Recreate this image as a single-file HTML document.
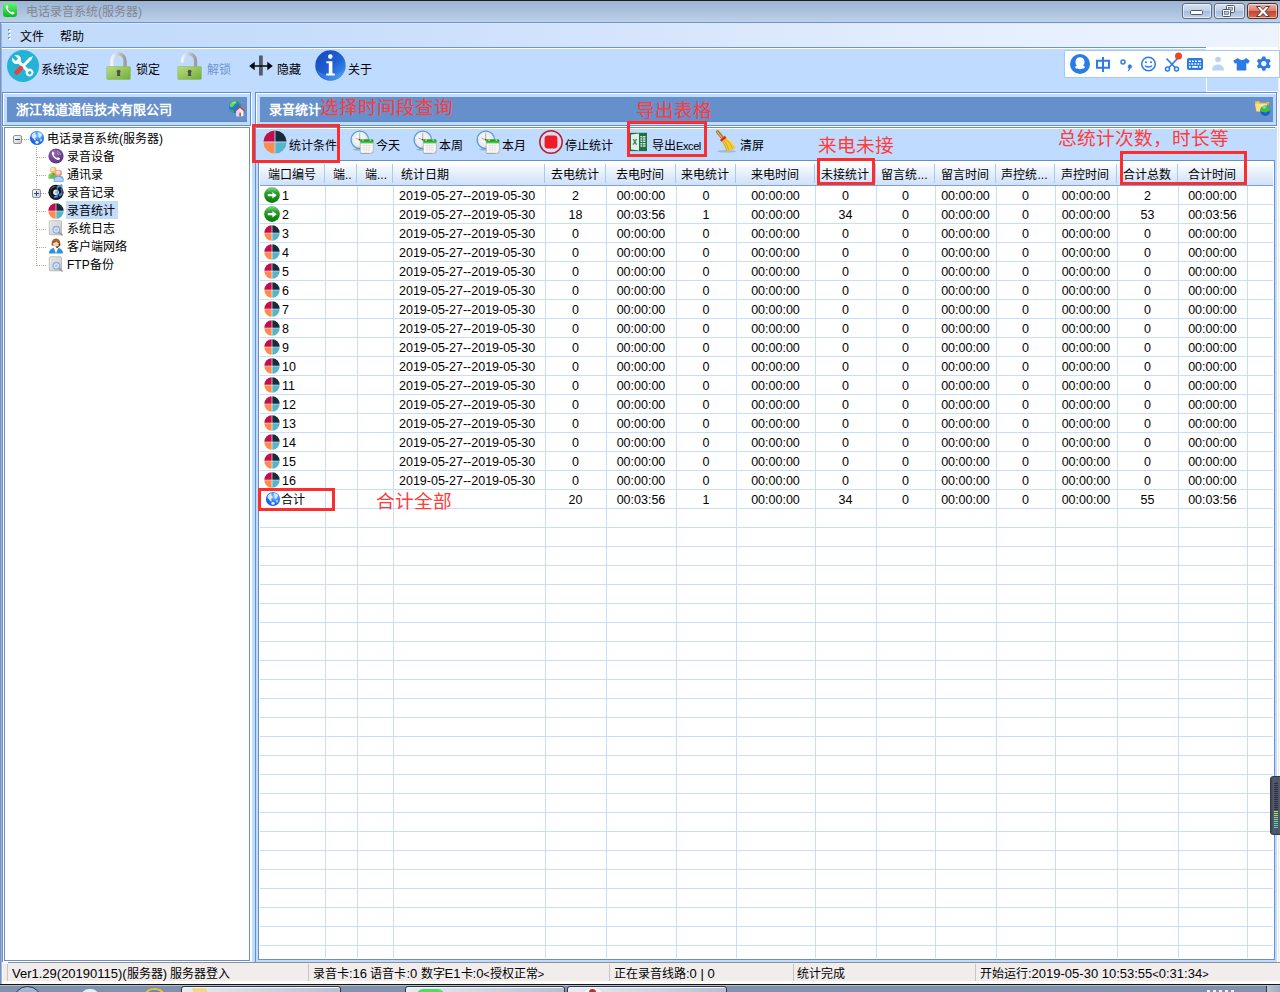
<!DOCTYPE html>
<html lang="zh-CN"><head><meta charset="utf-8"><title>电话录音系统(服务器)</title>
<style>
*{box-sizing:border-box;margin:0;padding:0}
html,body{width:1280px;height:992px;overflow:hidden}
body{position:relative;background:#bfdbff;font-family:"Liberation Sans",sans-serif;font-size:12px;color:#000;line-height:1}
.abs{position:absolute}
.l{font-size:13px}
.t{position:absolute;white-space:nowrap;line-height:14px;height:14px}
.red{position:absolute;border:3px solid #fe2d2d}
.rt{position:absolute;white-space:nowrap;color:#ff3b3b;font-family:"Liberation Sans",sans-serif;font-size:18.67px;line-height:20px}
/* table */
.hd{position:absolute;top:168px;height:14px;line-height:14px;text-align:center;white-space:nowrap;font-size:12px}
.c{position:absolute;height:14px;line-height:14px;text-align:center;white-space:nowrap;font-size:12.5px}
</style></head>
<body>
<svg width="0" height="0" style="position:absolute"><defs>
<linearGradient id="gGreenBall" x1="0" y1="0" x2="0" y2="1"><stop offset="0" stop-color="#8fd48f"/><stop offset=".35" stop-color="#2aa12c"/><stop offset="1" stop-color="#067806"/></linearGradient>
<radialGradient id="gGlobe" cx=".62" cy=".3" r=".85"><stop offset="0" stop-color="#8ccaff"/><stop offset=".45" stop-color="#2f80f7"/><stop offset="1" stop-color="#0a3cf0"/></radialGradient>
<radialGradient id="gPurple" cx=".4" cy=".3" r=".8"><stop offset="0" stop-color="#9467b5"/><stop offset="1" stop-color="#55287a"/></radialGradient>
<linearGradient id="gLockBody" x1="0" y1="0" x2="1" y2="1"><stop offset="0" stop-color="#bddc82"/><stop offset="1" stop-color="#6fae3a"/></linearGradient>
<linearGradient id="gShackle" x1="0" y1="0" x2="1" y2="0"><stop offset="0" stop-color="#f4f4f4"/><stop offset=".5" stop-color="#c9c9c9"/><stop offset="1" stop-color="#9c9c9c"/></linearGradient>
<linearGradient id="gInfo" x1="0" y1="0" x2="1" y2="1"><stop offset="0" stop-color="#1546b8"/><stop offset=".55" stop-color="#1f62d6"/><stop offset="1" stop-color="#4aa2f2"/></linearGradient>
<radialGradient id="gClock" cx=".45" cy=".4" r=".7"><stop offset="0" stop-color="#fbfafa"/><stop offset="1" stop-color="#e3e1e3"/></radialGradient>
<linearGradient id="gCalTop" x1="0" y1="0" x2="0" y2="1"><stop offset="0" stop-color="#0f8a12"/><stop offset=".55" stop-color="#2fb52f"/><stop offset="1" stop-color="#6fd06a"/></linearGradient>
<linearGradient id="gBtn" x1="0" y1="0" x2="0" y2="1"><stop offset="0" stop-color="#d3e0f1"/><stop offset=".48" stop-color="#bccde5"/><stop offset=".5" stop-color="#a3b9d8"/><stop offset="1" stop-color="#bdd3ee"/></linearGradient>
<linearGradient id="gClose" x1="0" y1="0" x2="0" y2="1"><stop offset="0" stop-color="#e9a99b"/><stop offset=".48" stop-color="#d77c6b"/><stop offset=".5" stop-color="#c3402c"/><stop offset="1" stop-color="#d7694f"/></linearGradient>
<linearGradient id="gBox" x1="0" y1="0" x2="1" y2="1"><stop offset="0" stop-color="#ffffff"/><stop offset="1" stop-color="#c9c9c4"/></linearGradient>
<linearGradient id="gDoc" x1="0" y1="0" x2="1" y2="1"><stop offset="0" stop-color="#f2f2f2"/><stop offset="1" stop-color="#c4c4c4"/></linearGradient>

<symbol id="pie" viewBox="0 0 16 16">
 <path d="M7.7 7.7V.3A7.7 7.7 0 0 0 .3 7.7z" fill="#c00f4b"/>
 <path d="M8.3 7.7V.3A7.7 7.7 0 0 1 15.700 7.7z" fill="#172b3a"/>
 <path d="M7.7 8.3v7.400A7.7 7.7 0 0 1 .3 8.3z" fill="#fb8b4e"/>
 <path d="M8.3 8.3v7.400A7.7 7.7 0 0 0 15.700 8.3z" fill="#55b5cb"/>
</symbol>
<symbol id="garrow" viewBox="0 0 16 16">
 <circle cx="8" cy="8" r="7.9" fill="url(#gGreenBall)"/>
 <path d="M3.8 7.1h4.6V4.900L12.700 8.200 8.400 11.500V9.300H3.800z" fill="#fff"/>
</symbol>
<symbol id="globe" viewBox="0 0 16 16">
 <circle cx="8" cy="8" r="7.100" fill="url(#gGlobe)"/>
 <path d="M2.600 5.200c.8-1.700 2.300-2.700 3.900-2.900.5.600-.2 1.200-.1 2 .2.900 1.300.8 1.300 1.900 0 1.100-1.300 1-1.500 2.100-.1.800.8 1.300.4 2.100-.9.300-1.500-.6-1.900-1.400-.5-.9-1.600-1.100-2-2.100-.2-.6-.2-1.200-.1-1.700z" fill="#eaf5ff" opacity=".9"/>
 <path d="M8.700 2.300c1.700-.1 3.300.8 4.300 2.200.3.800-.4 1-.9 1.400-.6.500-.1 1.300-.8 1.800-.7.500-1.500-.2-1.800-.9-.3-.8.400-1.200.2-1.900-.2-.8-1.300-1.500-1-2.600z" fill="#eaf5ff" opacity=".85"/>
 <path d="M6.800 11.200c.9-.5 2.300-.3 2.900.5.400.8-.3 1.700-1.300 2-.9.200-1.800-.2-2.100-1-.2-.6 0-1.200.5-1.500z" fill="#f2faff" opacity=".95"/>
 <path d="M11.300 9.300c.6-.4 1.500-.2 1.800.4.100.7-.4 1.500-1.100 1.700-.6.100-1-.3-1.100-.9-.1-.5 0-.9.400-1.200z" fill="#d6ebff" opacity=".8"/>
 <path d="M3 12.500a7.100 7.100 0 0 0 10 0 8 8 0 0 1-10 0z" fill="#9fe4ff" opacity=".7"/>
</symbol>
<symbol id="pphone" viewBox="0 0 16 16">
 <circle cx="8" cy="8" r="7.600" fill="url(#gPurple)"/>
 <path d="M4.300 3.800c.4-.4.900-.3 1.200.2l.7 1.200c.2.400.1.700-.2 1-.3.300-.3.600-.1 1 .6 1.100 1.400 1.900 2.500 2.500.4.200.7.200 1-.1.300-.3.700-.4 1-.2l1.200.7c.5.300.5.800.2 1.200-.7.800-1.700.9-2.700.5C7 11 5 9 4.100 6.800c-.4-1-.4-2.200.2-3z" fill="#fff"/>
 <path d="M9 3.500c1.900.2 3.300 1.600 3.500 3.500M9 5.200c1 .2 1.600.8 1.800 1.800" stroke="#d9c9e8" stroke-width=".8" fill="none" opacity=".8"/>
</symbol>
<symbol id="people" viewBox="0 0 16 16">
 <path d="M.5 12.800V9.500c0-1.500 1.800-2.500 4.800-2.500s4.800 1 4.800 2.500v3.300z" fill="#63c24a"/><path d="M1.300 12.200V9.700c0-1 1.500-1.800 4-1.800" fill="none" stroke="#a6e38f" stroke-width=".8"/>
 <path d="M4.200 7.200l1.100 2.300 1.100-2.300z" fill="#e33b2b"/>
 <circle cx="5.300" cy="4" r="3.200" fill="#efb956"/><circle cx="4.800" cy="3.400" r="1.900" fill="#fbe6b0"/>
 <path d="M5.600 15.700v-2.900c0-1.900 1.900-3 5-3s5 1.100 5 3v2.900z" fill="#5c9fe8"/><path d="M6.500 15.100v-2.100c0-1.300 1.500-2.100 4.100-2.100s4.100.8 4.100 2.100v2.100z" fill="#b3d4f9"/>
 <circle cx="10.600" cy="7.200" r="3.400" fill="#ee9a8a"/><circle cx="10.100" cy="6.600" r="2.100" fill="#fcdcd2"/>
</symbol>
<symbol id="cd" viewBox="0 0 16 16">
 <circle cx="8" cy="8.300" r="7.600" fill="#0f1113"/>
 <circle cx="8" cy="8.300" r="5.600" fill="none" stroke="#303438" stroke-width="1.200"/>
 <path d="M3 5a6 6 0 0 1 4-2.600" stroke="#5a6068" stroke-width="1" fill="none"/>
 <circle cx="8" cy="8.300" r="2.900" fill="#e6eef8"/><circle cx="8" cy="8.300" r="1.200" fill="#9db9e3"/>
 <path d="M9.300 9.500V2.200l4.600-1.400v7" stroke="#4a93e2" stroke-width="1" fill="none"/><path d="M9.300 2.200l4.600-1.400v1.600l-4.600 1.400z" fill="#4a93e2"/>
 <ellipse cx="7.800" cy="12.600" rx="2" ry="1.300" fill="#3e8be4" transform="rotate(-20 7.800 12.600)"/><ellipse cx="12.400" cy="10.600" rx="1.900" ry="1.200" fill="#3e8be4" transform="rotate(-20 12.400 10.600)"/>
 <path d="M9.300 9.500v3M13.900 7.800v2.800" stroke="#3e8be4" stroke-width="1"/>
</symbol>
<symbol id="logdoc" viewBox="0 0 16 16">
 <rect x="1.300" y=".8" width="12.200" height="14" rx=".8" fill="url(#gDoc)" stroke="#a9a9a9" stroke-width=".7"/>
 <rect x="3" y="2.300" width="8.800" height="11" fill="#dadada" opacity=".7"/>
 <circle cx="8.400" cy="9.800" r="3.300" fill="#dfeaf8" stroke="#8fb0dc" stroke-width="1.300"/>
 <circle cx="8.400" cy="9.800" r="1.500" fill="#a9c6ee"/>
 <path d="M11 12.300l3 2.600" stroke="#9a9a9a" stroke-width="1.600" stroke-linecap="round"/>
</symbol>
<symbol id="agent" viewBox="0 0 16 16">
 <path d="M3.800 7.800C3 3.600 4.900.6 8 .6s5 3 4.200 7.200z" fill="#a0602c"/>
 <ellipse cx="8" cy="5.600" rx="2.900" ry="3.400" fill="#f6cfa5"/>
 <path d="M4.600 4.800C5.400 2.600 7 2 8.300 2.200c1.700.2 2.900 1.300 3.100 3-1.200-.3-2.400-1-3.100-2-.8 1-2.200 1.600-3.700 1.600z" fill="#8a4c1d"/>
 <path d="M.9 15.600c0-3.400 2.400-5.300 4.900-5.700L8 12.500l2.200-2.600c2.500.4 4.900 2.300 4.900 5.700z" fill="#2f93d8"/>
 <path d="M5.800 9.900L8 15.600l2.200-5.700L8 11z" fill="#fff"/>
 <path d="M11.300 5.500v2c0 1-.8 1.500-2.300 1.500" stroke="#222" stroke-width=".9" fill="none"/><rect x="8" y="8.400" width="2" height="1.300" rx=".6" fill="#222"/>
</symbol>
<symbol id="clockcal" viewBox="0 0 24 24">
 <ellipse cx="9" cy="19.600" rx="6" ry=".8" fill="#6b7686" opacity=".45"/>
 <circle cx="9.800" cy="9.800" r="9.500" fill="#a9d3f3"/>
 <circle cx="9.800" cy="9.800" r="8.700" fill="url(#gClock)" stroke="#559bdc" stroke-width="1.300"/>
 <path d="M9.700 3.400V9.800L5.600 8.200" stroke="#8d8d8d" stroke-width=".7" fill="none"/><circle cx="9.700" cy="9.700" r=".9" fill="#4a4a4a"/>
 <path d="M9.800 2.300v1M9.800 16.300v1M2.300 9.800h1M16.300 9.800h1" stroke="#bdbdbd" stroke-width=".7"/>
 <rect x="10.300" y="9.600" width="13" height="13.800" rx="1" fill="#fdfdfd" stroke="#9b9b9b" stroke-width=".6"/>
 <path d="M10.300 10.400a1 1 0 0 1 1-1h11a1 1 0 0 1 1 1V13.500H10.300z" fill="url(#gCalTop)"/>
 <rect x="12.300" y="9.600" width="1.600" height="1" fill="#f3fff3"/><rect x="19.600" y="9.600" width="1.600" height="1" fill="#f3fff3"/>
 <path d="M11.800 15.500h10M11.800 17.800h10M11.800 20.100h10M14 14.300v7.800M16.500 14.300v7.800M19 14.300v7.800" stroke="#dcdcdc" stroke-width=".7"/>
 <path d="M19.800 23.400l3.500-3.500v2.500a1 1 0 0 1-1 1z" fill="#c9c9c9"/>
 <path d="M10.600 23.300h9" stroke="#8a8a8a" stroke-width=".6"/>
</symbol>
</defs></svg>
<div class="abs" style="left:0;top:0;width:1280px;height:1px;background:#1c1c1c"></div>
<div class="abs" style="left:0;top:1px;width:1280px;height:21px;background:linear-gradient(#9db5d4,#a9c0dd 45%,#bdd0e8)"></div>
<div class="abs" style="left:0;top:22px;width:1280px;height:1px;background:#6d94cc"></div>
<div class="abs" style="left:0;top:23px;width:1280px;height:1px;background:#dbe8fa"></div>
<svg class="abs" style="left:3px;top:3px" width="14" height="14" viewBox="0 0 14 14"><defs><linearGradient id="gph" x1="0" y1="0" x2="0" y2="1"><stop offset="0" stop-color="#62f673"/><stop offset="1" stop-color="#0db622"/></linearGradient></defs><rect width="14" height="14" rx="3" fill="url(#gph)"/><path d="M3.2 2.6c.5-.5 1.1-.4 1.4.2l.6 1.3c.2.4 0 .8-.3 1.1-.3.3-.3.6 0 1.1.7 1.2 1.600 2.100 2.900 2.800.4.200.7.200 1-.1.300-.300.800-.400 1.200-.200l1.100.7c.5.300.500.900.100 1.300-.700.700-1.700.800-2.700.400C6.300 10.200 4.100 8 3 5.500 2.600 4.500 2.600 3.300 3.200 2.600z" fill="#fff"/></svg>
<div class="t" style="left:26px;top:5px;color:#81868f;font-size:12px">电话录音系统(服务器)</div>
<div class="abs" style="left:0;top:24px;width:1280px;height:23px;background:linear-gradient(90deg,#c2dbfb 0,#c6ddfb 22%,#d6e5fc 50%,#e6effd 78%,#edf4fe)"></div>
<div class="abs" style="left:0;top:47px;width:1280px;height:1px;background:#6d94cc"></div>
<div class="abs" style="left:0;top:48px;width:1280px;height:1px;background:#fff"></div>
<div class="t" style="left:20px;top:30px">文件</div>
<div class="t" style="left:60px;top:30px">帮助</div>
<div class="t" style="left:41px;top:63px">系统设定</div>
<div class="t" style="left:136px;top:63px">锁定</div>
<div class="t" style="left:207px;top:63px;color:#6f95d0">解锁</div>
<div class="t" style="left:277px;top:63px">隐藏</div>
<div class="t" style="left:348px;top:63px">关于</div>
<div class="abs" style="left:3px;top:93px;width:249px;height:34px;border:1px solid #fff"></div>
<div class="abs" style="left:2px;top:92px;width:249px;height:34px;border:1px solid #6690cb"></div>
<div class="abs" style="left:7px;top:97px;width:240px;height:25px;background:#6690cb;border-bottom:1px solid #5f8ac6"></div>
<div class="t" style="left:16px;top:103px;color:#fff;font-weight:bold;font-size:13px">浙江铭道通信技术有限公司</div>
<div class="abs" style="left:2px;top:127px;width:1px;height:835px;background:#6690cb"></div>
<div class="abs" style="left:3px;top:127px;width:1px;height:835px;background:#fff"></div>
<div class="abs" style="left:250px;top:127px;width:2px;height:835px;background:#fff"></div>
<div class="abs" style="left:4px;top:127px;width:246px;height:834px;border:1px solid #6690cb;background:#fff"></div>
<div class="abs" style="left:3px;top:961px;width:249px;height:1px;background:#fff"></div>
<div class="abs" style="left:36px;top:147px;width:1px;height:119px;background:repeating-linear-gradient(#b4a996 0 1px,transparent 1px 2px)"></div>
<div class="abs" style="left:22px;top:139px;width:7px;height:1px;background:repeating-linear-gradient(90deg,#b4a996 0 1px,transparent 1px 2px)"></div>
<div class="abs" style="left:37px;top:157px;width:10px;height:1px;background:repeating-linear-gradient(90deg,#b4a996 0 1px,transparent 1px 2px)"></div>
<div class="abs" style="left:37px;top:175px;width:10px;height:1px;background:repeating-linear-gradient(90deg,#b4a996 0 1px,transparent 1px 2px)"></div>
<div class="abs" style="left:41px;top:193px;width:6px;height:1px;background:repeating-linear-gradient(90deg,#b4a996 0 1px,transparent 1px 2px)"></div>
<div class="abs" style="left:37px;top:211px;width:10px;height:1px;background:repeating-linear-gradient(90deg,#b4a996 0 1px,transparent 1px 2px)"></div>
<div class="abs" style="left:37px;top:229px;width:10px;height:1px;background:repeating-linear-gradient(90deg,#b4a996 0 1px,transparent 1px 2px)"></div>
<div class="abs" style="left:37px;top:247px;width:10px;height:1px;background:repeating-linear-gradient(90deg,#b4a996 0 1px,transparent 1px 2px)"></div>
<div class="abs" style="left:37px;top:265px;width:10px;height:1px;background:repeating-linear-gradient(90deg,#b4a996 0 1px,transparent 1px 2px)"></div>
<svg class="abs" style="left:13px;top:135px" width="9" height="9" viewBox="0 0 9 9"><rect x=".5" y=".5" width="8" height="8" rx="1.500" fill="url(#gBox)" stroke="#919191"/><path d="M2 4.500h5" stroke="#23429a" stroke-width="1"/></svg>
<svg class="abs" style="left:32px;top:189px" width="9" height="9" viewBox="0 0 9 9"><rect x=".5" y=".5" width="8" height="8" rx="1.500" fill="url(#gBox)" stroke="#919191"/><path d="M2 4.500h5M4.500 2v5" stroke="#23429a" stroke-width="1"/></svg>
<svg class="abs" style="left:29px;top:130px" width="16" height="16"><use href="#globe"/></svg>
<div class="t" style="left:47px;top:132px">电话录音系统(服务器)</div>
<div class="abs" style="left:66px;top:201px;width:52px;height:18px;background:#c3dcfb"></div>
<svg class="abs" style="left:48px;top:148px" width="16" height="16"><use href="#pphone"/></svg>
<div class="t" style="left:67px;top:150px">录音设备</div>
<svg class="abs" style="left:48px;top:166px" width="16" height="16"><use href="#people"/></svg>
<div class="t" style="left:67px;top:168px">通讯录</div>
<svg class="abs" style="left:48px;top:184px" width="16" height="16"><use href="#cd"/></svg>
<div class="t" style="left:67px;top:186px">录音记录</div>
<svg class="abs" style="left:48px;top:202.5px" width="16" height="16"><use href="#pie"/></svg>
<div class="t" style="left:67px;top:204px">录音统计</div>
<svg class="abs" style="left:48px;top:220px" width="16" height="16"><use href="#logdoc"/></svg>
<div class="t" style="left:67px;top:222px">系统日志</div>
<svg class="abs" style="left:48px;top:238px" width="16" height="16"><use href="#agent"/></svg>
<div class="t" style="left:67px;top:240px">客户端网络</div>
<svg class="abs" style="left:48px;top:256px" width="16" height="16"><use href="#logdoc"/></svg>
<div class="t" style="left:67px;top:258px">FTP备份</div>
<div class="abs" style="left:256px;top:93px;width:1022px;height:34px;border:1px solid #fff"></div>
<div class="abs" style="left:255px;top:92px;width:1022px;height:34px;border:1px solid #6690cb"></div>
<div class="abs" style="left:260px;top:97px;width:1013px;height:25px;background:#6690cb;border-bottom:1px solid #5f8ac6"></div>
<div class="t" style="left:269px;top:103px;color:#fff;font-weight:bold;font-size:13px">录音统计</div>
<div class="abs" style="left:255px;top:127px;width:1px;height:835px;background:#6690cb"></div>
<div class="abs" style="left:1277px;top:127px;width:1px;height:835px;background:#fff"></div>
<div class="abs" style="left:256px;top:127px;width:1019px;height:1px;background:#6690cb"></div>
<div class="abs" style="left:256px;top:128px;width:1019px;height:1px;background:#fff"></div>
<div class="abs" style="left:258px;top:160px;width:1017px;height:800px;border:1px solid #6690cb;background:#fff"></div>
<div class="t" style="left:289px;top:139px">统计条件</div>
<div class="t" style="left:376px;top:139px">今天</div>
<div class="t" style="left:439px;top:139px">本周</div>
<div class="t" style="left:502px;top:139px">本月</div>
<div class="t" style="left:565px;top:139px">停止统计</div>
<div class="t" style="left:740px;top:139px">清屏</div>
<div class="t" style="left:652px;top:139px">导出<span style="font-size:11px;letter-spacing:-0.4px">Excel</span></div>
<div class="abs" style="left:260px;top:161px;width:1013px;height:24px;background:linear-gradient(#ffffff 8%,#e6f0fc 50%,#cfe0f8)"></div>
<div class="abs" style="left:260px;top:185px;width:1013px;height:1px;background:#7da2d8"></div>
<div class="abs" style="left:324px;top:164px;width:1px;height:19px;background:#a9c8f5"></div>
<div class="abs" style="left:356px;top:164px;width:1px;height:19px;background:#a9c8f5"></div>
<div class="abs" style="left:392px;top:164px;width:1px;height:19px;background:#a9c8f5"></div>
<div class="abs" style="left:544px;top:164px;width:1px;height:19px;background:#a9c8f5"></div>
<div class="abs" style="left:605px;top:164px;width:1px;height:19px;background:#a9c8f5"></div>
<div class="abs" style="left:675px;top:164px;width:1px;height:19px;background:#a9c8f5"></div>
<div class="abs" style="left:735px;top:164px;width:1px;height:19px;background:#a9c8f5"></div>
<div class="abs" style="left:814px;top:164px;width:1px;height:19px;background:#a9c8f5"></div>
<div class="abs" style="left:875px;top:164px;width:1px;height:19px;background:#a9c8f5"></div>
<div class="abs" style="left:934px;top:164px;width:1px;height:19px;background:#a9c8f5"></div>
<div class="abs" style="left:995px;top:164px;width:1px;height:19px;background:#a9c8f5"></div>
<div class="abs" style="left:1054px;top:164px;width:1px;height:19px;background:#a9c8f5"></div>
<div class="abs" style="left:1116px;top:164px;width:1px;height:19px;background:#a9c8f5"></div>
<div class="abs" style="left:1177px;top:164px;width:1px;height:19px;background:#a9c8f5"></div>
<div class="abs" style="left:1246px;top:164px;width:1px;height:19px;background:#a9c8f5"></div>
<div class="hd" style="left:268px;text-align:left">端口编号</div>
<div class="hd" style="left:333px;text-align:left">端..</div>
<div class="hd" style="left:365px;text-align:left">端...</div>
<div class="hd" style="left:401px;text-align:left">统计日期</div>
<div class="hd" style="left:544px;width:61px">去电统计</div>
<div class="hd" style="left:605px;width:70px">去电时间</div>
<div class="hd" style="left:675px;width:60px">来电统计</div>
<div class="hd" style="left:735px;width:79px">来电时间</div>
<div class="hd" style="left:814px;width:61px">未接统计</div>
<div class="hd" style="left:875px;width:59px">留言统...</div>
<div class="hd" style="left:934px;width:61px">留言时间</div>
<div class="hd" style="left:995px;width:59px">声控统...</div>
<div class="hd" style="left:1054px;width:62px">声控时间</div>
<div class="hd" style="left:1116px;width:61px">合计总数</div>
<div class="hd" style="left:1177px;width:69px">合计时间</div>
<div class="abs" style="left:260px;top:204px;width:1013px;height:1px;background:#c6ddfb"></div>
<div class="abs" style="left:260px;top:223px;width:1013px;height:1px;background:#c6ddfb"></div>
<div class="abs" style="left:260px;top:242px;width:1013px;height:1px;background:#c6ddfb"></div>
<div class="abs" style="left:260px;top:261px;width:1013px;height:1px;background:#c6ddfb"></div>
<div class="abs" style="left:260px;top:280px;width:1013px;height:1px;background:#c6ddfb"></div>
<div class="abs" style="left:260px;top:299px;width:1013px;height:1px;background:#c6ddfb"></div>
<div class="abs" style="left:260px;top:318px;width:1013px;height:1px;background:#c6ddfb"></div>
<div class="abs" style="left:260px;top:337px;width:1013px;height:1px;background:#c6ddfb"></div>
<div class="abs" style="left:260px;top:356px;width:1013px;height:1px;background:#c6ddfb"></div>
<div class="abs" style="left:260px;top:375px;width:1013px;height:1px;background:#c6ddfb"></div>
<div class="abs" style="left:260px;top:394px;width:1013px;height:1px;background:#c6ddfb"></div>
<div class="abs" style="left:260px;top:413px;width:1013px;height:1px;background:#c6ddfb"></div>
<div class="abs" style="left:260px;top:432px;width:1013px;height:1px;background:#c6ddfb"></div>
<div class="abs" style="left:260px;top:451px;width:1013px;height:1px;background:#c6ddfb"></div>
<div class="abs" style="left:260px;top:470px;width:1013px;height:1px;background:#c6ddfb"></div>
<div class="abs" style="left:260px;top:489px;width:1013px;height:1px;background:#c6ddfb"></div>
<div class="abs" style="left:260px;top:508px;width:1013px;height:1px;background:#c6ddfb"></div>
<div class="abs" style="left:260px;top:527px;width:1013px;height:1px;background:#c6ddfb"></div>
<div class="abs" style="left:260px;top:546px;width:1013px;height:1px;background:#c6ddfb"></div>
<div class="abs" style="left:260px;top:565px;width:1013px;height:1px;background:#c6ddfb"></div>
<div class="abs" style="left:260px;top:584px;width:1013px;height:1px;background:#c6ddfb"></div>
<div class="abs" style="left:260px;top:603px;width:1013px;height:1px;background:#c6ddfb"></div>
<div class="abs" style="left:260px;top:622px;width:1013px;height:1px;background:#c6ddfb"></div>
<div class="abs" style="left:260px;top:641px;width:1013px;height:1px;background:#c6ddfb"></div>
<div class="abs" style="left:260px;top:660px;width:1013px;height:1px;background:#c6ddfb"></div>
<div class="abs" style="left:260px;top:679px;width:1013px;height:1px;background:#c6ddfb"></div>
<div class="abs" style="left:260px;top:698px;width:1013px;height:1px;background:#c6ddfb"></div>
<div class="abs" style="left:260px;top:717px;width:1013px;height:1px;background:#c6ddfb"></div>
<div class="abs" style="left:260px;top:736px;width:1013px;height:1px;background:#c6ddfb"></div>
<div class="abs" style="left:260px;top:755px;width:1013px;height:1px;background:#c6ddfb"></div>
<div class="abs" style="left:260px;top:774px;width:1013px;height:1px;background:#c6ddfb"></div>
<div class="abs" style="left:260px;top:793px;width:1013px;height:1px;background:#c6ddfb"></div>
<div class="abs" style="left:260px;top:812px;width:1013px;height:1px;background:#c6ddfb"></div>
<div class="abs" style="left:260px;top:831px;width:1013px;height:1px;background:#c6ddfb"></div>
<div class="abs" style="left:260px;top:850px;width:1013px;height:1px;background:#c6ddfb"></div>
<div class="abs" style="left:260px;top:869px;width:1013px;height:1px;background:#c6ddfb"></div>
<div class="abs" style="left:260px;top:888px;width:1013px;height:1px;background:#c6ddfb"></div>
<div class="abs" style="left:260px;top:907px;width:1013px;height:1px;background:#c6ddfb"></div>
<div class="abs" style="left:260px;top:926px;width:1013px;height:1px;background:#c6ddfb"></div>
<div class="abs" style="left:260px;top:945px;width:1013px;height:1px;background:#c6ddfb"></div>
<div class="abs" style="left:325px;top:186px;width:1px;height:772px;background:#c6ddfb"></div>
<div class="abs" style="left:357px;top:186px;width:1px;height:772px;background:#c6ddfb"></div>
<div class="abs" style="left:393px;top:186px;width:1px;height:772px;background:#c6ddfb"></div>
<div class="abs" style="left:545px;top:186px;width:1px;height:772px;background:#c6ddfb"></div>
<div class="abs" style="left:606px;top:186px;width:1px;height:772px;background:#c6ddfb"></div>
<div class="abs" style="left:676px;top:186px;width:1px;height:772px;background:#c6ddfb"></div>
<div class="abs" style="left:736px;top:186px;width:1px;height:772px;background:#c6ddfb"></div>
<div class="abs" style="left:815px;top:186px;width:1px;height:772px;background:#c6ddfb"></div>
<div class="abs" style="left:876px;top:186px;width:1px;height:772px;background:#c6ddfb"></div>
<div class="abs" style="left:935px;top:186px;width:1px;height:772px;background:#c6ddfb"></div>
<div class="abs" style="left:996px;top:186px;width:1px;height:772px;background:#c6ddfb"></div>
<div class="abs" style="left:1055px;top:186px;width:1px;height:772px;background:#c6ddfb"></div>
<div class="abs" style="left:1117px;top:186px;width:1px;height:772px;background:#c6ddfb"></div>
<div class="abs" style="left:1178px;top:186px;width:1px;height:772px;background:#c6ddfb"></div>
<div class="abs" style="left:1247px;top:186px;width:1px;height:772px;background:#c6ddfb"></div>
<div class="c" style="left:282px;top:189px">1</div>
<div class="c" style="left:399px;top:189px">2019-05-27--2019-05-30</div>
<div class="c" style="left:545px;width:61px;top:189px">2</div>
<div class="c" style="left:606px;width:70px;top:189px">00:00:00</div>
<div class="c" style="left:676px;width:60px;top:189px">0</div>
<div class="c" style="left:736px;width:79px;top:189px">00:00:00</div>
<div class="c" style="left:815px;width:61px;top:189px">0</div>
<div class="c" style="left:876px;width:59px;top:189px">0</div>
<div class="c" style="left:935px;width:61px;top:189px">00:00:00</div>
<div class="c" style="left:996px;width:59px;top:189px">0</div>
<div class="c" style="left:1055px;width:62px;top:189px">00:00:00</div>
<div class="c" style="left:1117px;width:61px;top:189px">2</div>
<div class="c" style="left:1178px;width:69px;top:189px">00:00:00</div>
<div class="c" style="left:282px;top:208px">2</div>
<div class="c" style="left:399px;top:208px">2019-05-27--2019-05-30</div>
<div class="c" style="left:545px;width:61px;top:208px">18</div>
<div class="c" style="left:606px;width:70px;top:208px">00:03:56</div>
<div class="c" style="left:676px;width:60px;top:208px">1</div>
<div class="c" style="left:736px;width:79px;top:208px">00:00:00</div>
<div class="c" style="left:815px;width:61px;top:208px">34</div>
<div class="c" style="left:876px;width:59px;top:208px">0</div>
<div class="c" style="left:935px;width:61px;top:208px">00:00:00</div>
<div class="c" style="left:996px;width:59px;top:208px">0</div>
<div class="c" style="left:1055px;width:62px;top:208px">00:00:00</div>
<div class="c" style="left:1117px;width:61px;top:208px">53</div>
<div class="c" style="left:1178px;width:69px;top:208px">00:03:56</div>
<div class="c" style="left:282px;top:227px">3</div>
<div class="c" style="left:399px;top:227px">2019-05-27--2019-05-30</div>
<div class="c" style="left:545px;width:61px;top:227px">0</div>
<div class="c" style="left:606px;width:70px;top:227px">00:00:00</div>
<div class="c" style="left:676px;width:60px;top:227px">0</div>
<div class="c" style="left:736px;width:79px;top:227px">00:00:00</div>
<div class="c" style="left:815px;width:61px;top:227px">0</div>
<div class="c" style="left:876px;width:59px;top:227px">0</div>
<div class="c" style="left:935px;width:61px;top:227px">00:00:00</div>
<div class="c" style="left:996px;width:59px;top:227px">0</div>
<div class="c" style="left:1055px;width:62px;top:227px">00:00:00</div>
<div class="c" style="left:1117px;width:61px;top:227px">0</div>
<div class="c" style="left:1178px;width:69px;top:227px">00:00:00</div>
<div class="c" style="left:282px;top:246px">4</div>
<div class="c" style="left:399px;top:246px">2019-05-27--2019-05-30</div>
<div class="c" style="left:545px;width:61px;top:246px">0</div>
<div class="c" style="left:606px;width:70px;top:246px">00:00:00</div>
<div class="c" style="left:676px;width:60px;top:246px">0</div>
<div class="c" style="left:736px;width:79px;top:246px">00:00:00</div>
<div class="c" style="left:815px;width:61px;top:246px">0</div>
<div class="c" style="left:876px;width:59px;top:246px">0</div>
<div class="c" style="left:935px;width:61px;top:246px">00:00:00</div>
<div class="c" style="left:996px;width:59px;top:246px">0</div>
<div class="c" style="left:1055px;width:62px;top:246px">00:00:00</div>
<div class="c" style="left:1117px;width:61px;top:246px">0</div>
<div class="c" style="left:1178px;width:69px;top:246px">00:00:00</div>
<div class="c" style="left:282px;top:265px">5</div>
<div class="c" style="left:399px;top:265px">2019-05-27--2019-05-30</div>
<div class="c" style="left:545px;width:61px;top:265px">0</div>
<div class="c" style="left:606px;width:70px;top:265px">00:00:00</div>
<div class="c" style="left:676px;width:60px;top:265px">0</div>
<div class="c" style="left:736px;width:79px;top:265px">00:00:00</div>
<div class="c" style="left:815px;width:61px;top:265px">0</div>
<div class="c" style="left:876px;width:59px;top:265px">0</div>
<div class="c" style="left:935px;width:61px;top:265px">00:00:00</div>
<div class="c" style="left:996px;width:59px;top:265px">0</div>
<div class="c" style="left:1055px;width:62px;top:265px">00:00:00</div>
<div class="c" style="left:1117px;width:61px;top:265px">0</div>
<div class="c" style="left:1178px;width:69px;top:265px">00:00:00</div>
<div class="c" style="left:282px;top:284px">6</div>
<div class="c" style="left:399px;top:284px">2019-05-27--2019-05-30</div>
<div class="c" style="left:545px;width:61px;top:284px">0</div>
<div class="c" style="left:606px;width:70px;top:284px">00:00:00</div>
<div class="c" style="left:676px;width:60px;top:284px">0</div>
<div class="c" style="left:736px;width:79px;top:284px">00:00:00</div>
<div class="c" style="left:815px;width:61px;top:284px">0</div>
<div class="c" style="left:876px;width:59px;top:284px">0</div>
<div class="c" style="left:935px;width:61px;top:284px">00:00:00</div>
<div class="c" style="left:996px;width:59px;top:284px">0</div>
<div class="c" style="left:1055px;width:62px;top:284px">00:00:00</div>
<div class="c" style="left:1117px;width:61px;top:284px">0</div>
<div class="c" style="left:1178px;width:69px;top:284px">00:00:00</div>
<div class="c" style="left:282px;top:303px">7</div>
<div class="c" style="left:399px;top:303px">2019-05-27--2019-05-30</div>
<div class="c" style="left:545px;width:61px;top:303px">0</div>
<div class="c" style="left:606px;width:70px;top:303px">00:00:00</div>
<div class="c" style="left:676px;width:60px;top:303px">0</div>
<div class="c" style="left:736px;width:79px;top:303px">00:00:00</div>
<div class="c" style="left:815px;width:61px;top:303px">0</div>
<div class="c" style="left:876px;width:59px;top:303px">0</div>
<div class="c" style="left:935px;width:61px;top:303px">00:00:00</div>
<div class="c" style="left:996px;width:59px;top:303px">0</div>
<div class="c" style="left:1055px;width:62px;top:303px">00:00:00</div>
<div class="c" style="left:1117px;width:61px;top:303px">0</div>
<div class="c" style="left:1178px;width:69px;top:303px">00:00:00</div>
<div class="c" style="left:282px;top:322px">8</div>
<div class="c" style="left:399px;top:322px">2019-05-27--2019-05-30</div>
<div class="c" style="left:545px;width:61px;top:322px">0</div>
<div class="c" style="left:606px;width:70px;top:322px">00:00:00</div>
<div class="c" style="left:676px;width:60px;top:322px">0</div>
<div class="c" style="left:736px;width:79px;top:322px">00:00:00</div>
<div class="c" style="left:815px;width:61px;top:322px">0</div>
<div class="c" style="left:876px;width:59px;top:322px">0</div>
<div class="c" style="left:935px;width:61px;top:322px">00:00:00</div>
<div class="c" style="left:996px;width:59px;top:322px">0</div>
<div class="c" style="left:1055px;width:62px;top:322px">00:00:00</div>
<div class="c" style="left:1117px;width:61px;top:322px">0</div>
<div class="c" style="left:1178px;width:69px;top:322px">00:00:00</div>
<div class="c" style="left:282px;top:341px">9</div>
<div class="c" style="left:399px;top:341px">2019-05-27--2019-05-30</div>
<div class="c" style="left:545px;width:61px;top:341px">0</div>
<div class="c" style="left:606px;width:70px;top:341px">00:00:00</div>
<div class="c" style="left:676px;width:60px;top:341px">0</div>
<div class="c" style="left:736px;width:79px;top:341px">00:00:00</div>
<div class="c" style="left:815px;width:61px;top:341px">0</div>
<div class="c" style="left:876px;width:59px;top:341px">0</div>
<div class="c" style="left:935px;width:61px;top:341px">00:00:00</div>
<div class="c" style="left:996px;width:59px;top:341px">0</div>
<div class="c" style="left:1055px;width:62px;top:341px">00:00:00</div>
<div class="c" style="left:1117px;width:61px;top:341px">0</div>
<div class="c" style="left:1178px;width:69px;top:341px">00:00:00</div>
<div class="c" style="left:282px;top:360px">10</div>
<div class="c" style="left:399px;top:360px">2019-05-27--2019-05-30</div>
<div class="c" style="left:545px;width:61px;top:360px">0</div>
<div class="c" style="left:606px;width:70px;top:360px">00:00:00</div>
<div class="c" style="left:676px;width:60px;top:360px">0</div>
<div class="c" style="left:736px;width:79px;top:360px">00:00:00</div>
<div class="c" style="left:815px;width:61px;top:360px">0</div>
<div class="c" style="left:876px;width:59px;top:360px">0</div>
<div class="c" style="left:935px;width:61px;top:360px">00:00:00</div>
<div class="c" style="left:996px;width:59px;top:360px">0</div>
<div class="c" style="left:1055px;width:62px;top:360px">00:00:00</div>
<div class="c" style="left:1117px;width:61px;top:360px">0</div>
<div class="c" style="left:1178px;width:69px;top:360px">00:00:00</div>
<div class="c" style="left:282px;top:379px">11</div>
<div class="c" style="left:399px;top:379px">2019-05-27--2019-05-30</div>
<div class="c" style="left:545px;width:61px;top:379px">0</div>
<div class="c" style="left:606px;width:70px;top:379px">00:00:00</div>
<div class="c" style="left:676px;width:60px;top:379px">0</div>
<div class="c" style="left:736px;width:79px;top:379px">00:00:00</div>
<div class="c" style="left:815px;width:61px;top:379px">0</div>
<div class="c" style="left:876px;width:59px;top:379px">0</div>
<div class="c" style="left:935px;width:61px;top:379px">00:00:00</div>
<div class="c" style="left:996px;width:59px;top:379px">0</div>
<div class="c" style="left:1055px;width:62px;top:379px">00:00:00</div>
<div class="c" style="left:1117px;width:61px;top:379px">0</div>
<div class="c" style="left:1178px;width:69px;top:379px">00:00:00</div>
<div class="c" style="left:282px;top:398px">12</div>
<div class="c" style="left:399px;top:398px">2019-05-27--2019-05-30</div>
<div class="c" style="left:545px;width:61px;top:398px">0</div>
<div class="c" style="left:606px;width:70px;top:398px">00:00:00</div>
<div class="c" style="left:676px;width:60px;top:398px">0</div>
<div class="c" style="left:736px;width:79px;top:398px">00:00:00</div>
<div class="c" style="left:815px;width:61px;top:398px">0</div>
<div class="c" style="left:876px;width:59px;top:398px">0</div>
<div class="c" style="left:935px;width:61px;top:398px">00:00:00</div>
<div class="c" style="left:996px;width:59px;top:398px">0</div>
<div class="c" style="left:1055px;width:62px;top:398px">00:00:00</div>
<div class="c" style="left:1117px;width:61px;top:398px">0</div>
<div class="c" style="left:1178px;width:69px;top:398px">00:00:00</div>
<div class="c" style="left:282px;top:417px">13</div>
<div class="c" style="left:399px;top:417px">2019-05-27--2019-05-30</div>
<div class="c" style="left:545px;width:61px;top:417px">0</div>
<div class="c" style="left:606px;width:70px;top:417px">00:00:00</div>
<div class="c" style="left:676px;width:60px;top:417px">0</div>
<div class="c" style="left:736px;width:79px;top:417px">00:00:00</div>
<div class="c" style="left:815px;width:61px;top:417px">0</div>
<div class="c" style="left:876px;width:59px;top:417px">0</div>
<div class="c" style="left:935px;width:61px;top:417px">00:00:00</div>
<div class="c" style="left:996px;width:59px;top:417px">0</div>
<div class="c" style="left:1055px;width:62px;top:417px">00:00:00</div>
<div class="c" style="left:1117px;width:61px;top:417px">0</div>
<div class="c" style="left:1178px;width:69px;top:417px">00:00:00</div>
<div class="c" style="left:282px;top:436px">14</div>
<div class="c" style="left:399px;top:436px">2019-05-27--2019-05-30</div>
<div class="c" style="left:545px;width:61px;top:436px">0</div>
<div class="c" style="left:606px;width:70px;top:436px">00:00:00</div>
<div class="c" style="left:676px;width:60px;top:436px">0</div>
<div class="c" style="left:736px;width:79px;top:436px">00:00:00</div>
<div class="c" style="left:815px;width:61px;top:436px">0</div>
<div class="c" style="left:876px;width:59px;top:436px">0</div>
<div class="c" style="left:935px;width:61px;top:436px">00:00:00</div>
<div class="c" style="left:996px;width:59px;top:436px">0</div>
<div class="c" style="left:1055px;width:62px;top:436px">00:00:00</div>
<div class="c" style="left:1117px;width:61px;top:436px">0</div>
<div class="c" style="left:1178px;width:69px;top:436px">00:00:00</div>
<div class="c" style="left:282px;top:455px">15</div>
<div class="c" style="left:399px;top:455px">2019-05-27--2019-05-30</div>
<div class="c" style="left:545px;width:61px;top:455px">0</div>
<div class="c" style="left:606px;width:70px;top:455px">00:00:00</div>
<div class="c" style="left:676px;width:60px;top:455px">0</div>
<div class="c" style="left:736px;width:79px;top:455px">00:00:00</div>
<div class="c" style="left:815px;width:61px;top:455px">0</div>
<div class="c" style="left:876px;width:59px;top:455px">0</div>
<div class="c" style="left:935px;width:61px;top:455px">00:00:00</div>
<div class="c" style="left:996px;width:59px;top:455px">0</div>
<div class="c" style="left:1055px;width:62px;top:455px">00:00:00</div>
<div class="c" style="left:1117px;width:61px;top:455px">0</div>
<div class="c" style="left:1178px;width:69px;top:455px">00:00:00</div>
<div class="c" style="left:282px;top:474px">16</div>
<div class="c" style="left:399px;top:474px">2019-05-27--2019-05-30</div>
<div class="c" style="left:545px;width:61px;top:474px">0</div>
<div class="c" style="left:606px;width:70px;top:474px">00:00:00</div>
<div class="c" style="left:676px;width:60px;top:474px">0</div>
<div class="c" style="left:736px;width:79px;top:474px">00:00:00</div>
<div class="c" style="left:815px;width:61px;top:474px">0</div>
<div class="c" style="left:876px;width:59px;top:474px">0</div>
<div class="c" style="left:935px;width:61px;top:474px">00:00:00</div>
<div class="c" style="left:996px;width:59px;top:474px">0</div>
<div class="c" style="left:1055px;width:62px;top:474px">00:00:00</div>
<div class="c" style="left:1117px;width:61px;top:474px">0</div>
<div class="c" style="left:1178px;width:69px;top:474px">00:00:00</div>
<div class="c" style="left:281px;top:493px;font-size:12px">合计</div>
<div class="c" style="left:545px;width:61px;top:493px">20</div>
<div class="c" style="left:606px;width:70px;top:493px">00:03:56</div>
<div class="c" style="left:676px;width:60px;top:493px">1</div>
<div class="c" style="left:736px;width:79px;top:493px">00:00:00</div>
<div class="c" style="left:815px;width:61px;top:493px">34</div>
<div class="c" style="left:876px;width:59px;top:493px">0</div>
<div class="c" style="left:935px;width:61px;top:493px">00:00:00</div>
<div class="c" style="left:996px;width:59px;top:493px">0</div>
<div class="c" style="left:1055px;width:62px;top:493px">00:00:00</div>
<div class="c" style="left:1117px;width:61px;top:493px">55</div>
<div class="c" style="left:1178px;width:69px;top:493px">00:03:56</div>
<svg class="abs" style="left:264px;top:187px" width="16" height="16"><use href="#garrow"/></svg>
<svg class="abs" style="left:264px;top:206px" width="16" height="16"><use href="#garrow"/></svg>
<svg class="abs" style="left:264px;top:225px" width="16" height="16"><use href="#pie"/></svg>
<svg class="abs" style="left:264px;top:244px" width="16" height="16"><use href="#pie"/></svg>
<svg class="abs" style="left:264px;top:263px" width="16" height="16"><use href="#pie"/></svg>
<svg class="abs" style="left:264px;top:282px" width="16" height="16"><use href="#pie"/></svg>
<svg class="abs" style="left:264px;top:301px" width="16" height="16"><use href="#pie"/></svg>
<svg class="abs" style="left:264px;top:320px" width="16" height="16"><use href="#pie"/></svg>
<svg class="abs" style="left:264px;top:339px" width="16" height="16"><use href="#pie"/></svg>
<svg class="abs" style="left:264px;top:358px" width="16" height="16"><use href="#pie"/></svg>
<svg class="abs" style="left:264px;top:377px" width="16" height="16"><use href="#pie"/></svg>
<svg class="abs" style="left:264px;top:396px" width="16" height="16"><use href="#pie"/></svg>
<svg class="abs" style="left:264px;top:415px" width="16" height="16"><use href="#pie"/></svg>
<svg class="abs" style="left:264px;top:434px" width="16" height="16"><use href="#pie"/></svg>
<svg class="abs" style="left:264px;top:453px" width="16" height="16"><use href="#pie"/></svg>
<svg class="abs" style="left:264px;top:472px" width="16" height="16"><use href="#pie"/></svg>
<svg class="abs" style="left:265px;top:491px" width="16" height="16"><use href="#globe"/></svg>
<svg class="abs" style="left:263px;top:130px" width="24" height="24"><use href="#pie"/></svg>
<svg class="abs" style="left:350px;top:130px" width="24" height="24"><use href="#clockcal"/></svg>
<svg class="abs" style="left:413px;top:130px" width="24" height="24"><use href="#clockcal"/></svg>
<svg class="abs" style="left:476px;top:130px" width="24" height="24"><use href="#clockcal"/></svg>
<svg class="abs" style="left:539px;top:130px" width="24" height="24" viewBox="0 0 24 24"><circle cx="12" cy="12" r="11.200" fill="#d5dcf3" stroke="#b3202a" stroke-width="1.500"/><rect x="5.600" y="5.600" width="12.800" height="12.800" rx="3" fill="#ee1c25"/></svg>
<svg class="abs" style="left:630px;top:132px" width="18" height="20" viewBox="0 0 18 20"><rect x="0" y=".8" width="17" height="18.300" fill="#1e7145"/><path d="M1 2.600l8-1v17l-8-1z" fill="#e2f1e8"/><path d="M3.200 7l3.400 5.600M6.600 7l-3.400 5.600" stroke="#2b8a57" stroke-width="1.300" fill="none"/><path d="M10.400 4h2v1.500h-2zM13 4h2.500v1.500H13zM10.400 6.300h2v1.500h-2zM13 6.300h2.500v1.500H13zM10.400 8.600h2v1.500h-2zM13 8.600h2.500v1.500H13zM10.400 10.900h2v1.500h-2zM13 10.900h2.500v1.500H13zM10.400 13.200h2v1.500h-2zM13 13.200h2.500v1.500H13z" fill="#cfe8d9"/></svg>
<svg class="abs" style="left:715px;top:129px" width="22" height="24" viewBox="0 0 22 24"><ellipse cx="11.500" cy="22.300" rx="9.500" ry="1.300" fill="#6b7686" opacity=".35"/><path d="M2.600 2.800L7.400 8.600" stroke="#b97a20" stroke-width="3.400" stroke-linecap="round"/><path d="M2.300 2.900L6.800 8.300" stroke="#e2ad5a" stroke-width="1.100" stroke-linecap="round"/><path d="M6.500 12.800L11.400 8.700C15.200 10.800 18.600 14 20.400 17.500L18.400 20.300 15 21.700 11.400 22.300C10.600 18.800 8.800 15.300 6.500 12.800z" fill="#f2cc38"/><path d="M9 11.500c2.200 2.800 3.900 6.300 4.700 9.900M10.600 10.200c2.900 2.400 5.500 5.600 7.200 9.400M7.800 12.600c1.900 2.700 3.200 5.900 3.900 9.200" stroke="#c79a1a" stroke-width=".7" fill="none"/><path d="M12 9.400c3 1.900 5.700 4.600 7.600 7.700" stroke="#fbe98a" stroke-width=".8" fill="none"/><path d="M5 10.900L9.900 6.800 11.400 8.700 6.500 12.800z" fill="#d0262a"/><path d="M5.400 10.700L9.800 7" stroke="#f0645f" stroke-width=".7"/></svg>
<svg class="abs" style="left:7px;top:50px" width="32" height="32" viewBox="0 0 32 32"><circle cx="16" cy="16" r="16" fill="#24b3d4"/><g transform="rotate(-45 16 16)"><circle cx="16" cy="6.800" r="4.500" fill="#fff"/><rect x="14.300" y="1" width="3.400" height="6.400" fill="#24b3d4"/><rect x="14.400" y="9" width="3.200" height="14" fill="#fff"/><circle cx="16" cy="25.200" r="3.800" fill="#fff"/><circle cx="16" cy="25.600" r="1.700" fill="#24b3d4"/></g><g transform="rotate(45 16 16)"><rect x="14.500" y="4.500" width="3" height="13" rx=".5" fill="#fff"/><path d="M15 4.500l1-2.800 1 2.800z" fill="#fff"/><rect x="13.600" y="16.800" width="4.800" height="10.700" rx="2.200" fill="#e8423c"/></g></svg>
<svg class="abs" style="left:106px;top:50px" width="26" height="32" viewBox="0 0 26 32"><path d="M6 17V10.500a6.500 6.500 0 0 1 13 0V17" fill="none" stroke="url(#gShackle)" stroke-width="3.400"/><rect x=".8" y="16.600" width="23.600" height="12.800" rx="1" fill="url(#gLockBody)" stroke="#8cba57" stroke-width=".6"/><circle cx="12.600" cy="21.600" r="1.900" fill="#4a4f4a"/><path d="M11.600 22h2l.7 4h-3.400z" fill="#4a4f4a"/></svg>
<svg class="abs" style="left:177px;top:50px" width="26" height="32" viewBox="0 0 26 32"><path d="M5.500 12.500V10.500a6.500 6.500 0 0 1 13 0V17" fill="none" stroke="url(#gShackle)" stroke-width="3.400"/><rect x=".8" y="16.600" width="23.600" height="12.800" rx="1" fill="url(#gLockBody)" stroke="#8cba57" stroke-width=".6"/><circle cx="12.600" cy="21.600" r="1.900" fill="#4a4f4a"/><path d="M11.600 22h2l.7 4h-3.400z" fill="#4a4f4a"/></svg>
<svg class="abs" style="left:248px;top:54px" width="26" height="24" viewBox="0 0 26 24"><rect x="11" y="1.500" width="3.800" height="20" fill="#575d66"/><path d="M1.200 12l5.500-4.300v3.500h12.600V7.700l5.500 4.300-5.500 4.300v-3.500H6.700v3.500z" fill="#0a0a0a"/></svg>
<svg class="abs" style="left:315px;top:50px" width="31" height="31" viewBox="0 0 31 31"><circle cx="15.500" cy="15.500" r="15.200" fill="url(#gInfo)"/><path d="M1.500 20A15 15 0 0 0 29.800 20 22 22 0 0 1 1.500 20z" fill="#6fb8ff" opacity=".25"/><circle cx="15.300" cy="6.600" r="2.300" fill="#fff"/><path d="M11.400 11.300h6v12.200h2.400v1.900h-8.600v-1.900h2.600V13.200h-2.400z" fill="#fff"/></svg>
<svg class="abs" style="left:228px;top:100px" width="18" height="18" viewBox="0 0 18 18"><circle cx="7" cy="7" r="6" fill="#1f78e6"/><path d="M1.600 5.500C2.500 2.600 5 1 7.800 1.100c1.400.9 1 2.300-.4 2.900-1.600.6-1.300 2.300-2.800 3-1.300.5-2.700-.3-3-1.500z" fill="#66dd33"/><path d="M8.800 1.300c1.800.5 3.200 1.800 3.800 3.500-.9.500-2 0-2.500-.9-.4-.8-1.500-1.500-1.300-2.600z" fill="#2fa82c"/><path d="M2.200 9.800c1.300-.6 2.900 0 3.600 1.300.2.700-.2 1.300-.9 1.400-1.200-.5-2.200-1.500-2.700-2.700z" fill="#3cb83a"/><path d="M4.300 3.200c.8-.6 1.800-.9 2.800-.8" stroke="#d9ffd0" stroke-width=".8" fill="none" opacity=".8"/><path d="M7.200 11l4.700-3.900 4.700 3.900v5.400H7.200z" fill="none"/><path d="M8.400 10.700l3.500-2.900 3.500 2.900v5.500h-7z" fill="#f4f2ff"/><path d="M8.400 10.700l3.500-2.900v8.400H8.400z" fill="#dcd8f6"/><path d="M6.900 11.300l5-4.200 5 4.200" fill="none" stroke="#d8401b" stroke-width="1.200"/><rect x="11.300" y="12.600" width="1.700" height="3.600" fill="#c8620f"/></svg>
<svg class="abs" style="left:1254px;top:100px" width="17" height="17" viewBox="0 0 17 17"><path d="M1 1.300h4.200l1.300 1.500h6.500v8.400H2z" fill="#f3c044"/><path d="M1 3.800l3.200-.6 1.200 1h8l-1.600 7.400H2.800z" fill="#fbe08a"/><path d="M3.500 4.500l1-.3.900.8h7" stroke="#fff4c4" stroke-width=".7" fill="none"/><path d="M12.200 1.800l3.300.5-1 2.800" fill="#f1b53a"/><circle cx="11.300" cy="10.800" r="5.100" fill="#1560d6"/><path d="M6.400 10c.3-2.600 2.400-4.400 4.900-4.400 2.600 0 4.700 1.800 5 4.300-.5 1.200-1.400 1.800-2.400 1.600-1-.2-1.200 1.100-2.300 1.300-1 .2-1.600-.8-2.600-.7-1 .1-2-.8-2.600-2.100z" fill="#3fbf3c"/><path d="M9 7.500c.9-.9 2.200-1.200 3.300-.9.300.8-.6 1.300-1.400 1.600-.8.300-1.400.600-2 0z" fill="#9be8f5" opacity=".85"/><path d="M8 7.200c.8-.9 1.700-1.300 2.800-1.400" stroke="#c9ffc0" stroke-width=".7" fill="none"/></svg>
<div class="abs" style="left:8px;top:29px;width:2px;height:2px;background:#7d9cd0"></div>
<div class="abs" style="left:9px;top:30px;width:2px;height:2px;background:#fff"></div>
<div class="abs" style="left:8px;top:33px;width:2px;height:2px;background:#7d9cd0"></div>
<div class="abs" style="left:9px;top:34px;width:2px;height:2px;background:#fff"></div>
<div class="abs" style="left:8px;top:37px;width:2px;height:2px;background:#7d9cd0"></div>
<div class="abs" style="left:9px;top:38px;width:2px;height:2px;background:#fff"></div>
<div class="abs" style="left:1182px;top:3px;width:30px;height:16px;border:1px solid #5f6f85;border-radius:3px;background:linear-gradient(#d6e2f2,#bfd0e7 47%,#a5bbd9 50%,#bed3ee);box-shadow:inset 0 0 0 1px rgba(255,255,255,.55)"></div>
<div class="abs" style="left:1214px;top:3px;width:31px;height:16px;border:1px solid #5f6f85;border-radius:3px;background:linear-gradient(#d6e2f2,#bfd0e7 47%,#a5bbd9 50%,#bed3ee);box-shadow:inset 0 0 0 1px rgba(255,255,255,.55)"></div>
<div class="abs" style="left:1247px;top:3px;width:31px;height:16px;border:1px solid #5a2a24;border-radius:3px;background:linear-gradient(#eab1a4,#d98171 47%,#c4432f 50%,#d8694f);box-shadow:inset 0 0 0 1px rgba(255,255,255,.55)"></div>
<svg class="abs" style="left:1190px;top:10px" width="14" height="7" viewBox="0 0 14 7"><rect x=".5" y=".5" width="12" height="4" rx="1" fill="#fff" stroke="#4d5564"/></svg>
<svg class="abs" style="left:1222px;top:5px" width="15" height="13" viewBox="0 0 15 13"><rect x="4.500" y=".5" width="8" height="7" rx="1" fill="#fff" stroke="#4d5564"/><rect x="6.500" y="2.500" width="4" height="3" fill="#b1c3de" stroke="#4d5564" stroke-width=".6"/><rect x=".5" y="4.500" width="8" height="7" rx="1" fill="#fff" stroke="#4d5564"/><rect x="2.500" y="6.500" width="4" height="3" fill="#b1c3de" stroke="#4d5564" stroke-width=".6"/></svg>
<svg class="abs" style="left:1255px;top:5px" width="16" height="13" viewBox="0 0 16 13"><path d="M1.500 1.500h3.700L8 4.500l2.800-3h3.700L10.200 6.500l4.300 5h-3.700L8 8.500l-2.800 3H1.500l4.300-5z" fill="#fff" stroke="#4d3a3a" stroke-width="1" stroke-linejoin="round"/></svg>
<div class="abs" style="left:1278px;top:24px;width:2px;height:960px;background:linear-gradient(90deg,#f1efe3 50%,#fcfbf6 50%)"></div>
<div class="abs" style="left:1206px;top:47px;width:72px;height:45px;background:#bfdbff;border-left:1px solid #fff;border-top:3px solid #fff;border-bottom:1px solid #fff"></div>
<div class="abs" style="left:1064px;top:50px;width:216px;height:28px;background:#fff;border:1px solid #a6c8f5"></div>
<svg class="abs" style="left:1066px;top:51px" width="214" height="26" viewBox="0 0 214 26"><circle cx="14" cy="13" r="10" fill="#2b7be4"/><path d="M14 6.300c2.600 0 4.500 2 4.500 4.600 0 1.500-.5 2.700-1.300 3.500.7.500 1.600 1 1.900 1.700.3.800-.7.900-1.400.6.300.9-.2 1.200-1.100.9-.7.500-1.600.700-2.600.700s-1.900-.2-2.600-.7c-.9.300-1.400 0-1.100-.9-.7.300-1.700.2-1.400-.6.300-.7 1.200-1.200 1.900-1.700-.8-.8-1.300-2-1.300-3.500 0-2.600 1.900-4.600 4.500-4.600z" fill="#fff"/><path d="M37 6v15M31 9.800h12v7H31z" fill="none" stroke="#2b7be4" stroke-width="2"/><circle cx="57" cy="11" r="2" fill="none" stroke="#2b7be4" stroke-width="1.500"/><path d="M62.200 15.500a1.700 1.700 0 1 1 1.700 1.700c0 1.500-.8 2.400-2 2.900 1-.8 1.200-1.600 1.200-2.600a1.700 1.700 0 0 1-.9-2z" fill="#2b7be4" stroke="#2b7be4" stroke-width=".8"/><circle cx="82.500" cy="13" r="6.800" fill="none" stroke="#2b7be4" stroke-width="1.500"/><circle cx="80" cy="11.200" r="1" fill="#2b7be4"/><circle cx="85" cy="11.200" r="1" fill="#2b7be4"/><path d="M79 14.500c1 2 6 2 7 0" fill="none" stroke="#2b7be4" stroke-width="1.300"/><path d="M100.500 7.500l9 9.500M111.500 7.500l-9 9.500" stroke="#2b7be4" stroke-width="1.700" fill="none"/><circle cx="101.500" cy="18" r="2" fill="none" stroke="#2b7be4" stroke-width="1.500"/><circle cx="110.500" cy="18" r="2" fill="none" stroke="#2b7be4" stroke-width="1.500"/><circle cx="112.500" cy="5" r="3.500" fill="#f0442a"/><rect x="121" y="7" width="16" height="12" rx="2" fill="#2b7be4"/><path d="M123 10.200h1.800M126 10.200h1.800M129 10.200h1.800M132 10.200h3M123 13h1.200M125.400 13h1.800M128.400 13h1.800M131.400 13h1.800M134.300 13h.8M123 15.900h1.800M126.200 15.900h5.600M133.200 15.900h1.800" stroke="#fff" stroke-width="1.600"/><circle cx="152" cy="8.500" r="2.800" fill="#bcd3f3"/><path d="M146 19.500c0-4 2.500-6 6-6s6 2 6 6z" fill="#bcd3f3"/><path d="M172 7l-4.800 2.800 1.800 3 1.700-.9v7.600h9.600v-7.600l1.700.9 1.800-3L180 7c-.8 1.200-2.200 1.900-4 1.900S172.800 8.200 172 7z" fill="#2b7be4"/><path d="M196.300 5.500h3l.5 2.100 1.400.8 2-.7 1.500 2.600-1.500 1.500v1.600l1.500 1.500-1.500 2.600-2-.7-1.400.8-.5 2.100h-3l-.5-2.100-1.400-.8-2 .7-1.500-2.600 1.500-1.500v-1.600l-1.500-1.500 1.500-2.600 2 .7 1.400-.8z" fill="#2b7be4"/><circle cx="197.800" cy="12.600" r="2.600" fill="#fff"/></svg>
<div class="red" style="left:252px;top:124px;width:88px;height:39px;border-width:3px"></div>
<div class="red" style="left:627px;top:121px;width:80px;height:36px;border-width:3px"></div>
<div class="red" style="left:817px;top:158px;width:58px;height:27px;border-width:3px"></div>
<div class="red" style="left:1120px;top:151px;width:127px;height:34px;border-width:3px"></div>
<div class="red" style="left:258px;top:488px;width:77px;height:23px;border-width:3px"></div>
<div class="rt" style="left:320px;top:98px">选择时间段查询</div>
<div class="rt" style="left:636px;top:101px">导出表格</div>
<div class="rt" style="left:818px;top:136px">来电未接</div>
<div class="rt" style="left:1058px;top:129px">总统计次数，时长等</div>
<div class="rt" style="left:376px;top:492px">合计全部</div>
<div class="abs" style="left:0;top:22px;width:1px;height:941px;background:#6d94cc"></div>
<div class="abs" style="left:1px;top:24px;width:1px;height:939px;background:#a3b4cc"></div>
<div class="abs" style="left:1270px;top:776px;width:12px;height:59px;border-radius:3px 0 0 3px;background:linear-gradient(90deg,#3f4556,#565d70 30%,#4a5163 60%,#5a6174);border:1px solid #32384a"></div>
<div class="abs" style="left:1274px;top:783px;width:4px;height:1px;background:#2a2f3c"></div>
<div class="abs" style="left:1274px;top:785px;width:4px;height:1px;background:#2a2f3c"></div>
<div class="abs" style="left:1274px;top:787px;width:4px;height:1px;background:#2a2f3c"></div>
<div class="abs" style="left:1274px;top:789px;width:4px;height:1px;background:#2a2f3c"></div>
<div class="abs" style="left:1274px;top:791px;width:4px;height:1px;background:#2a2f3c"></div>
<div class="abs" style="left:1274px;top:793px;width:4px;height:1px;background:#2a2f3c"></div>
<div class="abs" style="left:1274px;top:795px;width:4px;height:1px;background:#2a2f3c"></div>
<div class="abs" style="left:1274px;top:797px;width:4px;height:1px;background:#2a2f3c"></div>
<div class="abs" style="left:1274px;top:799px;width:4px;height:1px;background:#2a2f3c"></div>
<div class="abs" style="left:1274px;top:801px;width:4px;height:1px;background:#2a2f3c"></div>
<div class="abs" style="left:1274px;top:803px;width:4px;height:1px;background:#2a2f3c"></div>
<div class="abs" style="left:1274px;top:805px;width:4px;height:1px;background:#2a2f3c"></div>
<div class="abs" style="left:1274px;top:807px;width:4px;height:1px;background:#2a2f3c"></div>
<div class="abs" style="left:1274px;top:809px;width:4px;height:1px;background:#2a2f3c"></div>
<div class="abs" style="left:1274px;top:811px;width:4px;height:1px;background:#b2e35a"></div>
<div class="abs" style="left:1274px;top:813px;width:4px;height:1px;background:#a4e262"></div>
<div class="abs" style="left:1274px;top:815px;width:4px;height:1px;background:#96e26e"></div>
<div class="abs" style="left:1274px;top:817px;width:4px;height:1px;background:#86e07c"></div>
<div class="abs" style="left:1274px;top:819px;width:4px;height:1px;background:#74df8c"></div>
<div class="abs" style="left:1274px;top:821px;width:4px;height:1px;background:#62dd9c"></div>
<div class="abs" style="left:1274px;top:823px;width:4px;height:1px;background:#52dcaa"></div>
<div class="abs" style="left:1274px;top:825px;width:4px;height:1px;background:#46dab8"></div>
<div class="abs" style="left:1274px;top:827px;width:4px;height:1px;background:#3fd8c6"></div>
<div class="abs" style="left:0;top:962px;width:1280px;height:1px;background:#8f8f8f"></div>
<div class="abs" style="left:0;top:963px;width:1280px;height:18px;background:#f1edec"></div>
<div class="abs" style="left:0;top:981px;width:1280px;height:3px;background:linear-gradient(#fdfbf3,#ffffff)"></div>
<div class="abs" style="left:308px;top:964px;width:1px;height:17px;background:#c9c5c2"></div>
<div class="abs" style="left:609px;top:964px;width:1px;height:17px;background:#c9c5c2"></div>
<div class="abs" style="left:793px;top:964px;width:1px;height:17px;background:#c9c5c2"></div>
<div class="abs" style="left:975px;top:964px;width:1px;height:17px;background:#c9c5c2"></div>
<div class="t" style="left:12px;top:967px"><span class="l">Ver1.29(20190115)(</span>服务器<span class="l">)</span> 服务器登入</div>
<div class="t" style="left:313px;top:967px">录音卡<span class="l">:16</span> 语音卡<span class="l">:0</span> 数字<span class="l">E1</span>卡<span class="l">:0</span><span style="font-size:11px">&lt;</span>授权正常<span style="font-size:11px">&gt;</span></div>
<div class="t" style="left:614px;top:967px">正在录音线路<span class="l">:0 | 0</span></div>
<div class="t" style="left:797px;top:967px">统计完成</div>
<div class="t" style="left:980px;top:967px">开始运行<span class="l">:2019-05-30 10:53:55</span><span style="font-size:11px">&lt;</span><span class="l">0:31:34</span><span style="font-size:11px">&gt;</span></div>
<div class="abs" style="left:2px;top:962px;width:6px;height:2px;background:#fbfaf8"></div>
<div class="abs" style="left:7px;top:964px;width:1px;height:17px;background:#c9c5c2"></div>
<div class="abs" style="left:0;top:962px;width:1px;height:22px;background:#6d94cc"></div>
<div class="abs" style="left:1px;top:962px;width:1px;height:22px;background:#a3b4cc"></div>
<div class="abs" style="left:2px;top:964px;width:1px;height:19px;background:#fbfaf8"></div>
<div class="abs" style="left:0;top:984px;width:1280px;height:1px;background:#151515"></div>
<div class="abs" style="left:0;top:985px;width:1280px;height:1px;background:#b4c0d1"></div>
<div class="abs" style="left:0;top:986px;width:1280px;height:6px;background:#7f91ac"></div>
<div class="abs" style="left:13px;top:986px;width:29px;height:29px;border-radius:50%;border:1px solid #1f3556;background:radial-gradient(circle at 50% 60%,#7f9cc4,#b4c3d6)"></div>
<div class="abs" style="left:81px;top:989px;width:18px;height:8px;border-radius:9px 9px 0 0;background:#dff3fb"></div>
<div class="abs" style="left:145px;top:988px;width:19px;height:12px;border-radius:50%;border:2px solid #f0c020;border-bottom:none;background:#4a8fd8"></div>
<div class="abs" style="left:181px;top:986px;width:160px;height:10px;border:1px solid #2c3646;border-radius:3px 3px 0 0;background:linear-gradient(90deg,#e9edf3,#c9d2de 60%,#b4c0d0);box-shadow:inset 0 1px 0 #f4f6f9"></div>
<div class="abs" style="left:405px;top:986px;width:160px;height:10px;border:1px solid #2c3646;border-radius:3px 3px 0 0;background:linear-gradient(90deg,#e9edf3,#c9d2de 60%,#b4c0d0);box-shadow:inset 0 1px 0 #f4f6f9"></div>
<div class="abs" style="left:567px;top:986px;width:160px;height:10px;border:1px solid #2c3646;border-radius:3px 3px 0 0;background:linear-gradient(90deg,#e9edf3,#c9d2de 60%,#b4c0d0);box-shadow:inset 0 1px 0 #f4f6f9"></div>
<div class="abs" style="left:193px;top:988px;width:14px;height:6px;background:#f1d787;transform:skewX(20deg)"></div>
<div class="abs" style="left:417px;top:989px;width:27px;height:8px;border-radius:6px 6px 0 0;background:#4be064"></div>
<div class="abs" style="left:582px;top:988px;width:22px;height:22px;border-radius:50%;background:#fbfbfb"></div>
<div class="abs" style="left:589px;top:989px;width:7px;height:7px;border-radius:50%;background:#c8282a"></div>
<div class="abs" style="left:1266px;top:986px;width:14px;height:8px;border-left:1px solid #2c3646;background:linear-gradient(90deg,#b9c3d2,#9eacbf)"></div>
<div class="abs" style="left:1207px;top:990px;width:28px;height:2px;background:repeating-linear-gradient(90deg,#eef2f7 0 3px,transparent 3px 6px)"></div>
</body></html>
